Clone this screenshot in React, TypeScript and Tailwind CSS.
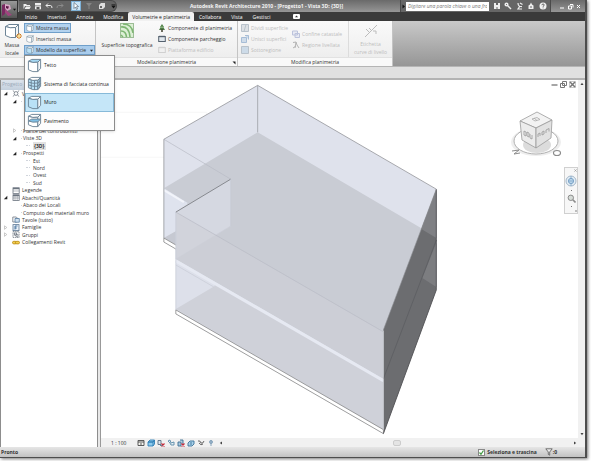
import React from 'react';
import { clsx } from 'clsx';

type IconProps = { className?: string };

type BoxKind = 'roof' | 'grid' | 'wall' | 'floor' | 'plain';

const MassIcon: React.FC<IconProps & { kind: BoxKind }> = ({ kind, className }) => (
  <svg viewBox="0 0 16 16" className={className} fill="none" stroke="#6d8496" strokeWidth="1">
    <path d="M1.5 3.5 L5 1.5 L14.5 1.5 L11.5 4.5 Q6 5.5 1.5 3.5Z" fill={kind === 'roof' ? '#a5d8f3' : '#fff'} />
    <path
      d="M1.5 3.5 Q6 5.5 11.5 4.5 L11.5 14.5 Q6 15.5 1.5 12.5Z"
      fill={kind === 'wall' || kind === 'grid' ? '#b9e1f6' : '#fff'}
    />
    <path d="M11.5 4.5 L14.5 1.5 L14.5 11 L11.5 14.5Z" fill={kind === 'grid' ? '#b9e1f6' : '#f2f6f8'} />
    {kind === 'grid' && (
      <path d="M4.5 4.5 V14 M8 5 V15 M13 3 V13 M1.5 6.5 Q6 8.5 11.5 7.5 L14.5 5 M1.5 9.5 Q6 11.5 11.5 11 L14.5 8" />
    )}
    {kind === 'floor' && (
      <path d="M1.5 8.5 L5 6.5 L14.5 6.5 L11.5 9.5 Q6 10.5 1.5 8.5Z" fill="#7fc0e6" />
    )}
  </svg>
);

const TopoIcon = () => (
  <svg viewBox="0 0 14 15" className="h-[15px] w-[14px]" fill="none" stroke="#7db672">
    <rect x=".5" y=".5" width="13" height="14" fill="#dcefd5" stroke="#9dbd96" />
    <path d="M1 4 Q9 3 10 14" strokeWidth="1.6" />
    <path d="M1 8 Q6 8 6.500 14" strokeWidth="1.6" />
    <path d="M3 1 Q12 1 13 10" strokeWidth="1.4" />
    <path d="M1 12 L3 14" strokeWidth="1.4" />
  </svg>
);

const TreeIcon = () => (
  <svg viewBox="0 0 8 8" className="size-2">
    <path d="M4 0 L6 3 L5.300 3 L7 6 L1 6 L2.700 3 L2 3Z" fill="#4d7f45" />
    <path d="M3.200 5 h1.600 v3 h-1.600z" fill="#4a4a3a" />
    <path d="M4 1.500 L4.700 4 L3.300 4Z" fill="#b7d9a8" />
  </svg>
);

const ParkIcon: React.FC<{ pale?: boolean }> = ({ pale }) => (
  <svg viewBox="0 0 8 8" className="size-2" fill="none" stroke={pale ? '#d0d0d0' : '#54616e'}>
    <rect x=".7" y="1.500" width="6.600" height="5" fill={pale ? '#f0f0f0' : '#dfe6ec'} />
    <path d="M1 1.500 h6" strokeWidth="1.400" />
  </svg>
);

const PaleIcon: React.FC<{ kind: 'split' | 'merge' | 'sub' | 'border' | 'region' }> = ({ kind }) => (
  <svg viewBox="0 0 8 8" className="size-2 shrink-0" fill="none" stroke="#b9c2cb">
    {kind === 'split' && <path d="M.5 .5 h7 v7 h-7z M5 .5 L3 7.500" fill="#dde1e5" />}
    {kind === 'merge' && <path d="M.5 2.500 h5 v5 h-5z M4 .5 h3.500 v4" fill="#cfdcea" stroke="#a7bdd6" />}
    {kind === 'sub' && <path d="M.5 .5 h7 v7 h-7z" fill="#cddbe8" />}
    {kind === 'border' && <path d="M.5 1 h5 v4 h-5z M3 3.500 h4.500 v4 h-4.500z" stroke="#bcc3dc" fill="#e8eaf3" />}
    {kind === 'region' && <path d="M1 1.500 L4 1 L5 4 L7 7 M1 7 L4 5 M4 1 L3 7" stroke="#b4b4b4" />}
  </svg>
);

const SheetIcon: React.FC<{ kind: string }> = ({ kind }) => (
  <svg viewBox="0 0 8 7" className="h-[7px] w-2 shrink-0" fill="none" stroke="#6c7580" strokeWidth=".8">
    {kind === 'views' && (
      <>
        <circle cx="4" cy="3.500" r="1.900" />
        <path d="M.8 .5 L2.500 2 M7.200 .5 L5.500 2 M.8 6.500 L2.500 5 M7.200 6.500 L5.500 5" />
      </>
    )}
    {(kind === 'legend' || kind === 'table') && (
      <>
        <rect x="1" y=".8" width="6.200" height="5.600" fill="#fff" />
        <path d="M1 1.500 h6.200" strokeWidth="1.500" />
        <path d="M1 4 h6.200" strokeWidth=".5" />
        {kind === 'table' && <path d="M3 2 v4.500 M5.200 2 v4.500" strokeWidth=".5" />}
      </>
    )}
    {kind === 'sheet' && (
      <>
        <path d="M.8 1 h3.500 l1 1 v4 h-4.500z" fill="#fff" />
        <path d="M3 2.500 h4.300 v3.700 h-4.300z" fill="#cfe0ef" stroke="#557ba0" />
      </>
    )}
    {kind === 'family' && (
      <>
        <rect x="1" y=".6" width="6" height="6" fill="#eaf1f8" stroke="#5c7894" />
        <path d="M3 5.500 v-3.500 h2.500 M3 4 h1.800" stroke="#24598c" />
      </>
    )}
    {kind === 'group' && (
      <>
        <rect x="1" y=".6" width="6" height="6" strokeDasharray="1.500 .6" />
        <rect x="2.300" y="2" width="2.400" height="2" />
        <circle cx="4.800" cy="4.500" r="1.200" />
      </>
    )}
    {kind === 'link' && (
      <>
        <rect x=".5" y="2.300" width="4" height="2.600" rx="1.300" fill="#f4cf52" stroke="#b8860b" />
        <rect x="3.500" y="2.300" width="4" height="2.600" rx="1.300" fill="#f4cf52" stroke="#b8860b" />
      </>
    )}
  </svg>
);

type Row = { text: string; level: number; icon?: string; toggle?: 'open' | 'closed'; active?: boolean };

const rows: Row[] = [
  { text: 'Viste (tutto)', level: 0, icon: 'views', toggle: 'open' },
  { text: '', level: 1, toggle: 'open' },
  { text: '', level: 2 },
  { text: '', level: 2 },
  { text: '', level: 2 },
  { text: 'Piante dei controsoffitti', level: 1, toggle: 'closed' },
  { text: 'Viste 3D', level: 1, toggle: 'open' },
  { text: '{3D}', level: 2, active: true },
  { text: 'Prospetti', level: 1, toggle: 'open' },
  { text: 'Est', level: 2 },
  { text: 'Nord', level: 2 },
  { text: 'Ovest', level: 2 },
  { text: 'Sud', level: 2 },
  { text: 'Legende', level: 0, icon: 'legend' },
  { text: 'Abachi/Quantità', level: 0, icon: 'table', toggle: 'open' },
  { text: 'Abaco dei Locali', level: 1 },
  { text: 'Computo dei materiali muro', level: 1 },
  { text: 'Tavole (tutto)', level: 0, icon: 'sheet' },
  { text: 'Famiglie', level: 0, icon: 'family', toggle: 'closed' },
  { text: 'Gruppi', level: 0, icon: 'group', toggle: 'closed' },
  { text: 'Collegamenti Revit', level: 0, icon: 'link' },
];

const ProjectTree = () => (
  <ul className="grid h-[156px] auto-rows-fr">
    {rows.map((row, i) => (
      <li
        key={i}
        className={clsx(
          'flex items-center whitespace-nowrap text-[#333]',
          row.level === 0 && 'pl-[2px]',
          row.level === 1 && 'pl-[11px]',
          row.level === 2 && 'pl-[25px]'
        )}
      >
        <svg viewBox="0 0 5 5" className={clsx('shrink-0', row.level === 2 ? 'hidden' : 'mr-1 size-[5px]')}>
          {row.toggle === 'open' && <path d="M4.300 .8 V4.300 H.8Z" fill="#222" />}
          {row.toggle === 'closed' && <path d="M1.500 .8 L3.800 2.500 L1.500 4.300Z" fill="#fff" stroke="#aaa" strokeWidth=".6" />}
        </svg>
        {row.icon ? (
          <span className="mr-[2px] flex"><SheetIcon kind={row.icon} /></span>
        ) : (
          <span
            className={clsx('shrink-0 border-t border-dotted border-gray-300', row.level === 1 ? 'mr-px w-px' : 'mr-[3px] w-1')}
          />
        )}
        <span className={clsx(row.active && 'bg-[#e2e2e2] px-px font-bold')}>{row.text}</span>
      </li>
    ))}
  </ul>
);

const menuItems: { label: string; kind: BoxKind; selected?: boolean }[] = [
  { label: 'Tetto', kind: 'roof' },
  { label: 'Sistema di facciata continua', kind: 'grid' },
  { label: 'Muro', kind: 'wall', selected: true },
  { label: 'Pavimento', kind: 'floor' },
];

const SurfaceMenu = () => (
  <div
    role="menu"
    className="absolute top-full left-0 z-20 grid h-[76px] w-[91px] auto-rows-fr border border-[#8c8c8c] bg-[#fdfdfd] shadow-sm"
  >
    {menuItems.map((item) => (
      <button
        key={item.label}
        role="menuitem"
        className={clsx(
          'flex items-center gap-[2px] border pl-px whitespace-nowrap text-[#222]',
          item.selected ? 'border-[#86b9d8] bg-[#c5e6f8]' : 'border-transparent'
        )}
      >
        <MassIcon kind={item.kind} className="size-[15px] shrink-0" />
        {item.label}
      </button>
    ))}
  </div>
);

const TitleBar = () => (
  <header className="flex h-3 items-center bg-linear-to-b from-[#6a6a6a] to-[#969696] text-white">
    <div className="ml-[19px] flex h-full w-[98px] shrink-0 items-center rounded-r-md border border-l-0 border-[#4a4a4a] bg-[#646464]">
      <button aria-label="Apri" className="ml-1">
        <svg viewBox="0 0 8 8" className="size-2" fill="#eee"><path d="M.5 2 h2.500 l1 1 h3 v1 h-5 l-1.500 3z M3 4.500 h5 l-1.500 2.500 h-5z" /></svg>
      </button>
      <button aria-label="Salva" className="ml-[3px]">
        <svg viewBox="0 0 8 8" className="size-2" fill="#eee"><path d="M1 1 h6 v2.500 h-6z M1 4.200 h6 v3 h-6z" /><path d="M2.500 5 h3 v2 h-3z" fill="#555" /></svg>
      </button>
      <button aria-label="Annulla" className="ml-[3px]">
        <svg viewBox="0 0 8 8" className="size-2" fill="none" stroke="#eee"><path d="M1 3.500 h4.500 q1.500 0 1.500 2.500 M3 1.500 L1 3.500 L3 5.500" /></svg>
      </button>
      <button aria-label="Ripristina" className="ml-[3px]">
        <svg viewBox="0 0 8 8" className="size-2" fill="none" stroke="#8b8b8b"><path d="M7 3.500 h-4.500 q-1.500 0 -1.500 2.500 M5 1.500 L7 3.500 L5 5.500" /></svg>
      </button>
      <button aria-label="Seleziona" className="ml-[7px] flex h-[10px] w-[11px] items-center justify-center border border-[#7fb2d8] bg-[#cbe5f7]">
        <svg viewBox="0 0 8 8" className="size-2"><path d="M2 .5 L6.500 4.500 L4.500 4.700 L5.500 7 L4.500 7.500 L3.500 5 L2 6.500Z" fill="#fff" stroke="#456" strokeWidth=".6" /></svg>
      </button>
      <button aria-label="Filtro" className="ml-1">
        <svg viewBox="0 0 8 8" className="size-2" fill="#858585"><path d="M1 1 h6 L4.500 4 v3 h-1 v-3z" /></svg>
      </button>
      <button aria-label="Viste" className="ml-[5px]">
        <svg viewBox="0 0 8 8" className="size-2" fill="#ddd"><path d="M1 3 L3 1 h4 v4 L5 7 H1Z" /><path d="M2 4 h2 v2 h-2z" fill="#666" /></svg>
      </button>
      <button aria-label="Altro" className="ml-[5px]">
        <svg viewBox="0 0 5 5" className="size-[5px]" fill="#111"><path d="M.5 .5 h4 v1 h-4z M.5 2 h4 L2.500 4.500Z" /></svg>
      </button>
    </div>
    <h1 className="flex-1 pl-4 text-center font-bold whitespace-nowrap text-[#f4f4f4]">
      Autodesk Revit Architecture 2010 - [Progetto1 - Vista 3D: {'{3D}'}]
    </h1>
    <div className="flex h-full w-[151px] shrink-0 items-center border-x border-[#4a4a4a] bg-[#666]">
      <svg viewBox="0 0 5 5" className="size-[5px]" fill="#111"><path d="M1.500 .5 L4 2.500 L1.500 4.500Z" /></svg>
      <input
        aria-label="Cerca"
        placeholder="Digitare una parola chiave o una frase"
        className="h-[9px] w-[83px] border-0 bg-white px-[2px] italic outline-none placeholder:text-[#777]"
      />
      <div className="flex flex-1 items-center justify-evenly">
        <button aria-label="Avvia ricerca">
          <svg viewBox="0 0 8 8" className="size-2" fill="#eee"><path d="M1 1 h2 v2 h2 v-2 h2 v6 h-2.500 v-2 h-1 v2 h-2.500z" /></svg>
        </button>
        <button aria-label="Chiave">
          <svg viewBox="0 0 8 8" className="size-2" fill="none" stroke="#eee" strokeWidth="1.500"><path d="M3 3 L7 7" /><circle cx="2.500" cy="2.500" r="1.300" /></svg>
        </button>
        <button aria-label="Comunicazioni">
          <svg viewBox="0 0 8 8" className="size-2" fill="none" stroke="#eee" strokeWidth="1.200"><path d="M2 1 q0 4 4 3.500 M4 1 L6.500 2.500 M4 4 L2 7 h4" /></svg>
        </button>
        <button aria-label="Preferiti">
          <svg viewBox="0 0 8 8" className="size-2" fill="#eee"><path d="M4 .5 L5 2.500 L6.500 3.500 V7 H1.500 V3.500 L3 2.500Z" /><path d="M3.500 4 h1 v2 h-1z" fill="#666" /></svg>
        </button>
        <button aria-label="Guida">
          <svg viewBox="0 0 8 8" className="size-2"><circle cx="4" cy="4" r="3.500" fill="#f2f2f2" /><path d="M2.900 3.200 q0 -1.200 1.200 -1.200 q1.100 0 1.100 1 q0 .8 -1.100 1.300 v.5 M4.100 5.500 v.8" fill="none" stroke="#444" strokeWidth=".8" /></svg>
        </button>
      </div>
    </div>
    <div className="mr-[3px] ml-2 flex shrink-0 gap-px">
      <button aria-label="Riduci a icona">
        <svg viewBox="0 0 7 7" className="size-[7px]" stroke="#fff"><path d="M1 5 h4" /></svg>
      </button>
      <button aria-label="Ripristina finestra">
        <svg viewBox="0 0 7 7" className="size-[7px]" stroke="#fff" fill="none"><path d="M1.500 3 h3 v3 h-3z M3 1.500 h3 v3" /></svg>
      </button>
      <button aria-label="Chiudi">
        <svg viewBox="0 0 7 7" className="size-[7px]" stroke="#fff"><path d="M2 2 L5 5 M5 2 L2 5" /></svg>
      </button>
    </div>
  </header>
);

const tabs = ['Inizio', 'Inserisci', 'Annota', 'Modifica', 'Volumetrie e planimetria', 'Collabora', 'Vista', 'Gestisci'];

const TabBar = () => (
  <nav className="flex h-[9px] items-stretch bg-[#3a3a3a] pl-5 text-white">
    {tabs.map((tab) => (
      <button
        key={tab}
        className={clsx(
          'whitespace-nowrap',
          tab === 'Volumetrie e planimetria' ? 'rounded-t-xs bg-[#f1f1f1] px-1 text-[#222]' : 'px-[5px]'
        )}
      >
        {tab}
      </button>
    ))}
    <button aria-label="Riduci barra" className="ml-[18px] flex items-center">
      <svg viewBox="0 0 7 5" className="h-[5px] w-[7px]"><rect width="7" height="5" rx="1" fill="#fff" /><path d="M2 3.300 L3.500 1.500 L5 3.300Z" fill="#333" /></svg>
    </button>
  </nav>
);

const Panel: React.FC<{ title: string; className: string; arrow?: boolean; children: React.ReactNode }> = ({
  title,
  className,
  arrow,
  children,
}) => (
  <section className={clsx('flex shrink-0 flex-col border-r border-[#c4c4c4]', className)}>
    <div className="flex flex-1 bg-linear-to-b from-[#fafafa] to-[#eeeeee]">{children}</div>
    <h2 className="relative h-[9px] border-t border-[#e2e2e2] bg-[#f9f9f9] text-center text-[#333]">
      {title}
      {arrow && (
        <svg viewBox="0 0 4 4" className="absolute top-[3px] right-px size-1" fill="#222"><path d="M.5 .5 H3.500 V3.500Z" /></svg>
      )}
    </h2>
  </section>
);

const Ribbon = () => (
  <div className="flex h-[45px] bg-linear-to-b from-[#c9c9c9] to-[#969696] whitespace-nowrap">
    <Panel title="" className="w-24">
      <button className="flex w-6 flex-col items-center pt-[2px] text-[#333]">
        <span className="relative mb-[2px]">
          <MassIcon kind="plain" className="size-4" />
          <svg viewBox="0 0 6 6" className="absolute right-[-2px] bottom-0 size-[6px]">
            <path d="M3 0 V6 M0 3 H6 M1 1 L5 5 M5 1 L1 5" stroke="#d07a1c" />
            <circle cx="3" cy="3" r="1.300" fill="#ffe08a" />
          </svg>
        </span>
        <span>Massa</span>
        <span>locale</span>
      </button>
      <div className="flex flex-col items-start pt-[2px] text-[#333]">
        <button className="flex h-[10px] items-center gap-[2px] border border-[#6f9fca] bg-[#b3d2ee] px-px">
          <MassIcon kind="plain" className="size-2" />
          Mostra massa
        </button>
        <button className="my-px flex h-[10px] items-center gap-[2px] px-[2px]">
          <MassIcon kind="plain" className="size-2" />
          Inserisci massa
        </button>
        <div className="relative">
          <button
            aria-haspopup="menu"
            aria-expanded="true"
            className="flex h-[10px] w-[71px] items-center gap-[2px] border border-[#6f9fca] bg-[#a9ccec] px-px"
          >
            <MassIcon kind="wall" className="size-2 shrink-0" />
            Modello da superficie
            <svg viewBox="0 0 4 4" className="ml-auto size-[3px] shrink-0" fill="#222"><path d="M0 1 H4 L2 3.500Z" /></svg>
          </button>
          <SurfaceMenu />
        </div>
      </div>
    </Panel>
    <Panel title="Modellazione planimetria" className="w-[142px]" arrow>
      <button className="flex w-[61px] flex-col items-center gap-[3px] pt-[2px] pl-px text-[#333]">
        <TopoIcon />
        Superficie topografica
      </button>
      <div className="flex flex-col items-start gap-[3px] pt-[3px] pl-px text-[#333]">
        <button className="flex items-center gap-[2px]"><TreeIcon />Componente di planimetria</button>
        <button className="flex items-center gap-[2px]"><ParkIcon />Componente parcheggio</button>
        <button className="flex items-center gap-[2px] text-[#bdbdbd]"><ParkIcon pale />Piattaforma edificio</button>
      </div>
    </Panel>
    <Panel title="Modifica planimetria" className="w-[155px]">
      <div className="flex w-[51px] flex-col items-start gap-[3px] pt-[3px] pl-[3px] text-[#bdbdbd]">
        <button disabled className="flex items-center gap-[2px]"><PaleIcon kind="split" />Dividi superficie</button>
        <button disabled className="flex items-center gap-[2px]"><PaleIcon kind="merge" />Unisci superfici</button>
        <button disabled className="flex items-center gap-[2px]"><PaleIcon kind="sub" />Sottoregione</button>
      </div>
      <div className="flex w-[60px] flex-col items-start justify-center gap-[3px] border-r border-[#dcdcdc] pl-[3px] text-[#bdbdbd]">
        <button disabled className="flex items-center gap-[2px]"><PaleIcon kind="border" />Confine catastale</button>
        <button disabled className="flex items-center gap-[2px]"><PaleIcon kind="region" />Regione livellata</button>
      </div>
      <button disabled className="flex flex-1 flex-col items-center pt-[3px] text-[#bdbdbd]">
        <svg viewBox="0 0 14 14" className="mb-[2px] size-[14px]" fill="none" stroke="#bcbcbc">
          <path d="M1 13 L13 1 M2 5 L5 8 M9 7 h3 v3 M5 4 l3 3" />
        </svg>
        <span>Etichetta</span>
        <span>curve di livello</span>
      </button>
    </Panel>
  </div>
);

/* isometric mass with two floor slabs */
const Building = () => (
  <svg viewBox="101 80 478 358" className="h-full w-full" strokeLinejoin="round">
    <path d="M101 112 H207 V157 H101" fill="none" stroke="#f7f7f7" />
    <path d="M164 139 L258 85 L437 189 L384 330 L384 434 L176 314 V249 L164 242Z" fill="#dfe2ec" />
    <path d="M164 238 L176 231 V245Z" fill="#c6c9d2" />
    <path d="M164 188 L258 132 L437 237 L437 252 L384 379 L176 259 L176 212 L188 204Z" fill="#c9ccd4" />
    <path d="M164 188 L188 203 L176 211 V231 L164 237Z" fill="#dfe3ee" />
    <path d="M164 190 L184 202" stroke="#f2f4fa" strokeWidth="2" />
    <path d="M176 212 L231 179 L231 226 L176 259Z" fill="#d5d8e1" />
    <path d="M176 259 L231 226" stroke="#cdd0da" strokeWidth=".7" />
    <path d="M176 260 L384 381 L384 430 L176 310Z" fill="#dde0ea" />
    <path d="M176 309 L215 286 L215 283 L384 381 V430Z" fill="#cfd1d9" />
    <path d="M176 212 L384 332 L384 379 L176 259Z" fill="#cdcfd7" opacity=".55" />
    <path d="M176 261 L384 381" stroke="#e6e9f2" strokeWidth="3" />
    <path d="M176 265 L214 287" stroke="#c4c8d2" strokeWidth=".6" />
    <path d="M176 212 L384 332 M164 139 L231 179" fill="none" stroke="#b9bcc5" strokeWidth=".7" />
    <path d="M437 189 L384 330 L384 434 L437 290Z" fill="#6c6d70" />
    <path d="M437 189 L422 229 L437 238Z" fill="#7f8084" />
    <path d="M437 243 L423 278 L437 287Z" fill="#7c7d80" />
    <path d="M437 240 L384 379" stroke="#5f6064" />
    <path d="M176 310 L384 430 V434 L176 314Z" fill="#fff" stroke="#777" strokeWidth=".7" />
    <path d="M176 245 L164 238 V242 L176 249" fill="#fff" stroke="#777" strokeWidth=".7" />
    <path d="M384 434 L437 290 V189" fill="none" stroke="#505154" strokeWidth=".9" />
    <path d="M164 238 V139 L258 85 L437 189" fill="none" stroke="#94969b" strokeWidth=".8" />
    <path d="M258 85 V132" stroke="#9c9ea4" strokeWidth=".8" />
    <path d="M176 212 L231 179" stroke="#75777c" strokeWidth=".8" />
    <path d="M231 179 V226 M176 212 V310" stroke="#c5c9d5" strokeWidth=".7" />
    <path d="M384 331 V430" stroke="#c9cbd2" strokeWidth=".8" />
    <path d="M437 189 L384 330" stroke="#8d8e93" strokeWidth=".6" />
  </svg>
);

const ViewCube = () => (
  <svg viewBox="508 108 58 50" className="absolute top-7 right-[13px] h-[50px] w-[58px]" fill="none">
    <ellipse cx="537" cy="142" rx="25" ry="14" fill="#eeeeee" />
    <ellipse cx="537" cy="141" rx="22" ry="13" fill="#fff" stroke="#b0b0b0" />
    <ellipse cx="538" cy="145" rx="14" ry="8" fill="#dcdcdc" />
    <path d="M521 121 L538 112 L553 120 L537 128Z" fill="#f3f3f3" stroke="#9a9a9a" strokeWidth=".8" />
    <path d="M521 121 L537 128 V148 L523 140Z" fill="#ececec" stroke="#9a9a9a" strokeWidth=".8" />
    <path d="M537 128 L553 120 L552 138 L537 148Z" fill="#e2e2e2" stroke="#9a9a9a" strokeWidth=".8" />
    <path d="M533 119 l3 2 M535 118 l3 2.500 M538 117.500 l3 2 M533 119 l5 -1.500 M536 121 l5 -1.500" stroke="#aaa" strokeWidth=".8" />
    <path d="M525 131 v4 l2 1 v-4 z M528 132 v4 l2 1 v-4z M531 134 v4 l2 1 v-4" stroke="#999" strokeWidth=".8" />
    <path d="M539 137 v-3 l2 -1 v3 M543 135 v-3 l2 -1 v3z M547 133 v-3 l3 -1.500 v3" stroke="#999" strokeWidth=".8" />
    <path d="M513 151 l7 -1 l-5 4 l6 -1" stroke="#8c8c8c" />
    <ellipse cx="558" cy="153" rx="3.500" ry="2.500" stroke="#8c8c8c" strokeWidth="1.200" />
  </svg>
);

const NavBar = () => (
  <div className="absolute top-[87px] right-0 flex h-[47px] w-[14px] flex-col items-center justify-between border border-[#d0d0d0] bg-[#f7f7f7] py-px">
    <svg viewBox="0 0 4 4" className="size-[3px] self-end" stroke="#999"><path d="M.5 .5 L3.500 3.500 M3.500 .5 L.5 3.500" /></svg>
    <button aria-label="Disco di navigazione">
      <svg viewBox="0 0 12 12" className="size-3" fill="none">
        <circle cx="6" cy="6" r="5" fill="#e3edf5" stroke="#a5b8c9" />
        <circle cx="6" cy="6" r="2.600" fill="#bcd7ec" stroke="#7ba3c6" />
        <path d="M6 1 V3.500 M6 8.500 V11 M4 6 h4" stroke="#7ba3c6" strokeWidth=".8" />
      </svg>
    </button>
    <i className="size-px bg-[#777]" />
    <button aria-label="Zoom">
      <svg viewBox="0 0 9 9" className="size-[9px]" fill="none" stroke="#8c8c8c"><circle cx="3.800" cy="3.800" r="2.700" fill="#d6dcd8" /><path d="M5.800 5.800 L8.500 8.500" strokeWidth="1.600" /></svg>
    </button>
    <i className="size-px bg-[#777]" />
    <i className="size-[2px] self-end rounded-full bg-[#aaa]" />
  </div>
);

const DocButtons = () => (
  <div className="absolute top-px right-[2px] flex gap-[2px]">
    <button aria-label="Riduci vista">
      <svg viewBox="0 0 7 7" className="size-[7px]" stroke="#888"><path d="M.5 4 h6" strokeWidth="1.500" /></svg>
    </button>
    <button aria-label="Ripristina vista">
      <svg viewBox="0 0 7 7" className="size-[7px]" stroke="#777" fill="#fff"><path d="M2.500 .5 h4 v4 h-4z M.5 2.500 h4 v4 h-4z" /></svg>
    </button>
    <button aria-label="Chiudi vista">
      <svg viewBox="0 0 7 7" className="size-[7px]" stroke="#777" fill="none"><path d="M1 1 L6 6 M6 1 L1 6" strokeWidth="1.500" /><path d="M.5 .5 h6 v6 h-6z" strokeWidth=".4" /></svg>
    </button>
  </div>
);

const viewTools = [
  { label: 'Livello di dettaglio', d: 'M1 1.500 h6 v5 h-6z M1 3 h6 M3 5 h2', stroke: '#4a4a4a', fill: '#f5f5f0' },
  { label: 'Stile grafico', d: 'M1 3 L3 1 H7.500 L6 3 Z M1 3 H6 V7 H1Z M6 3 L7.500 1 V5 L6 7', stroke: '#2f7fb5', fill: '#8ecbed' },
  { label: 'Ombre', d: 'M1 1.500 h3 v4 h-3z M3 6.500 h3', stroke: '#5b7185', fill: '#dbe6ee', red: true },
  { label: 'Rendering', d: 'M1 2 L3 1 L4 4 L7 3 V6 L4 6 L3 4Z', stroke: '#5a8aa8', fill: '#e8f1f6' },
  { label: 'Ritaglia vista', d: 'M1 3 h3 v4 h-3z M3 1 h3 v4', stroke: '#3a6d92', fill: '#a9c9de', red: true },
  { label: 'Regione di ritaglio', d: 'M1 4 L3 2 H7 V5 L5 7 H1Z M4 3 v3', stroke: '#3a7298', fill: '#a8d1e9' },
  { label: 'Nascondi elementi', d: 'M1 2 Q3 1 4 4 Q6 5 7 2 M2 4 Q4 7 6 5', stroke: '#555', fill: 'none' },
  { label: 'Mostra elementi nascosti', d: 'M4 1.500 a1.500 1.500 0 0 1 0 3z M4 1.500 a1.500 1.500 0 0 0 0 3z M4 5 v2', stroke: '#7d9cb5', fill: '#dcebf5' },
];

const ViewBar = () => (
  <div className="flex h-[9px] shrink-0 items-center bg-[#f1f1f1] pl-[10px] text-[#333]">
    <button className="mr-2 w-[18px] text-left whitespace-nowrap">1 : 100</button>
    <div className="flex gap-[2px]">
      {viewTools.map((tool) => (
        <button key={tool.label} aria-label={tool.label}>
          <svg viewBox="0 0 8 8" className="size-2">
            <path d={tool.d} stroke={tool.stroke} fill={tool.fill} strokeWidth=".9" />
            {tool.red && <path d="M4.500 4.500 L7.500 7.500 M7.500 4.500 L4.500 7.500" stroke="#c62a3a" strokeWidth="1.200" />}
          </svg>
        </button>
      ))}
    </div>
    <svg viewBox="0 0 4 4" className="ml-1 size-1" fill="#444"><path d="M3 .5 V3.500 L.8 2Z" /></svg>
    <div className="flex h-full flex-1 items-center justify-end">
      <div className="h-[6px] w-2 rounded-xs border border-[#ccc] bg-[#e4e4e4]" />
      <svg viewBox="0 0 4 4" className="mr-2 ml-[172px] size-1" fill="#444"><path d="M1 .5 V3.500 L3.200 2Z" /></svg>
    </div>
  </div>
);

const StatusBar = () => (
  <footer className="flex h-[10px] shrink-0 items-center bg-linear-to-b from-[#e6e6e6] to-[#c2c2c2] pr-7 pl-px font-bold text-[#333]">
    <span className="flex-1">Pronto</span>
    <label className="flex items-center gap-[2px] whitespace-nowrap">
      <span className="relative flex">
        <input type="checkbox" defaultChecked className="peer size-[7px] appearance-none border border-[#888] bg-white" />
        <svg
          viewBox="0 0 7 7"
          className="pointer-events-none absolute inset-0 hidden size-[7px] peer-checked:block"
          fill="none"
          stroke="#3f9a3f"
        >
          <path d="M1.500 3.500 L3 5.300 L5.500 1.500" strokeWidth="1.200" />
        </svg>
      </span>
      Seleziona e trascina
    </label>
    <button className="ml-2 flex items-center">
      <svg viewBox="0 0 8 8" className="size-2" fill="#eee" stroke="#555" strokeWidth=".8"><path d="M.8 .8 h6.400 L4.700 4 v3.200 l-1.400 -.8 v-2.400z" /></svg>
      :0
    </button>
  </footer>
);

export default function App() {
  return (
    <div className="flex h-screen bg-white pr-1 pb-[3px] font-['Open_Sans',sans-serif] text-[5px] leading-[8px]">
      <div className="relative flex min-w-0 flex-1 flex-col border-r-2 border-b border-[#4d4d4d] bg-[#e3e3e3] shadow-[1px_1px_3px_#777]">
        <TitleBar />
        <TabBar />
        <button
          aria-label="Menu applicazione"
          className="absolute top-0 left-0 flex h-[19px] w-[18px] items-center border border-[#333] bg-linear-to-b from-[#999] to-[#555]"
        >
          <svg viewBox="0 0 12 14" className="h-[14px] w-3">
            <path d="M1 2 L4 1 L4 11 L1 13Z" fill="#7b2a62" />
            <path d="M4 1 L9 2 L10 6 L6 8 L4 5Z" fill="#d9a8c7" />
            <path d="M5 3 L8 3.500 L7 6 L5 5Z" fill="#5b1645" />
            <path d="M4 6 L11 12 L7 13 L4 9Z" fill="#a1447f" />
          </svg>
          <svg viewBox="0 0 4 4" className="size-[3px]" fill="#111"><path d="M0 1 H4 L2 3.500Z" /></svg>
        </button>
        <Ribbon />
        <div className="h-3 shrink-0 border-t border-[#b5b5b5] bg-[#e0e0e0]" />
        <div className="flex min-h-0 flex-1 border-t-2 border-[#b3b3b3]">
          <aside className="flex w-[98px] shrink-0 flex-col border-x border-[#8d8d8d] bg-white">
            <h2 className="h-[10px] shrink-0 bg-linear-to-b from-[#dde4ec] to-[#c4d0dd] pl-px text-[#9aa8b8]">Progetto</h2>
            <ProjectTree />
          </aside>
          <div className="w-[3px] shrink-0 border-r border-[#999] bg-[#e8e8e8]" />
          <main className="flex min-w-0 flex-1 flex-col bg-white">
            <div className="flex min-h-0 flex-1">
              <div className="relative min-w-0 flex-1">
                <Building />
                <DocButtons />
                <ViewCube />
                <NavBar />
              </div>
              <div className="flex w-[7px] shrink-0 flex-col items-center justify-between bg-[#f1f1f1] py-[2px]">
                <svg viewBox="0 0 4 4" className="size-1" fill="#444"><path d="M.5 3 H3.500 L2 .8Z" /></svg>
                <svg viewBox="0 0 4 4" className="size-1" fill="#444"><path d="M.5 1 H3.500 L2 3.200Z" /></svg>
              </div>
            </div>
            <ViewBar />
          </main>
        </div>
        <StatusBar />
      </div>
    </div>
  );
}
